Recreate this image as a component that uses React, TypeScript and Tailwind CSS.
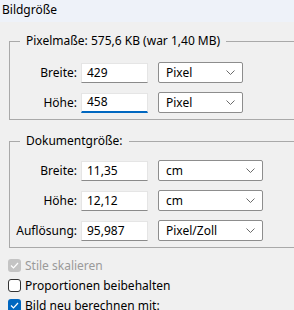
import React from 'react';

const font = { fontFamily: '"Segoe UI", "Noto Sans", sans-serif' };

const Chevron = () => (
  <svg width="9" height="5" viewBox="0 0 9 5" className="shrink-0">
    <path d="M0.5 0.5 L4.5 4.5 L8.5 0.5" fill="none" stroke="#6b6b6b" strokeWidth="1" />
  </svg>
);

const Row = ({ label, value, unit, selectW, focused }: any) => (
  <div className="flex items-center h-[21px]">
    <div className="w-[68px] pr-[1px] text-right">{label}</div>
    <div
      className={`ml-[3px] w-[67px] h-[20px] bg-white flex items-center pl-[5px] border-[#e5e5e5] border ${
        focused ? 'border-b-2 border-b-[#0067c0]' : 'border-b-[#8a8a8a]'
      }`}
    >
      {value}
    </div>
    <div
      className={`ml-[10px] h-[21px] bg-white border border-[#8d8d8d] rounded-[2px] flex items-center justify-between pl-[7px] pr-[7px] ${selectW}`}
    >
      <span>{unit}</span>
      <Chevron />
    </div>
  </div>
);

const Check = ({ state }: { state: 'disabled' | 'off' | 'on' }) => {
  if (state === 'off')
    return <div className="w-[13px] h-[13px] rounded-[3px] border border-[#333] bg-white" />;
  const bg = state === 'on' ? 'bg-[#0067c0]' : 'bg-[#c4c4c4]';
  return (
    <div className={`w-[13px] h-[13px] rounded-[3px] flex items-center justify-center ${bg}`}>
      <svg width="9" height="7" viewBox="0 0 9 7">
        <path d="M1 3.5 L3.5 6 L8 1" fill="none" stroke="white" strokeWidth="1.2" />
      </svg>
    </div>
  );
};

export default function App() {
  return (
    <div className="w-[294px] h-[310px] overflow-hidden bg-[#f0f0f0] text-[12px] text-black leading-[16px]" style={font}>
      <div className="h-[22px] bg-[#eef2f9] pl-[2px] pt-[2px]">Bildgröße</div>

      <fieldset className="ml-[9px] mt-[11px] w-[300px] border border-[#a9a9a9] pb-[6px]">
        <legend className="ml-[10px] px-[6px]">Pixelmaße: 575,6 KB (war 1,40 MB)</legend>
        <div className="mt-[13px] flex flex-col gap-[9px]">
          <Row label="Breite:" value="429" unit="Pixel" selectW="w-[85px]" />
          <Row label="Höhe:" value="458" unit="Pixel" selectW="w-[85px]" focused />
        </div>
      </fieldset>

      <fieldset className="ml-[9px] mt-[13px] w-[300px] border border-[#a9a9a9] pb-[6px]">
        <legend className="ml-[10px] px-[6px]">Dokumentgröße:</legend>
        <div className="mt-[11px] flex flex-col gap-[9px]">
          <Row label="Breite:" value="11,35" unit="cm" selectW="w-[105px]" />
          <Row label="Höhe:" value="12,12" unit="cm" selectW="w-[105px]" />
          <Row label="Auflösung:" value="95,987" unit="Pixel/Zoll" selectW="w-[105px]" />
        </div>
      </fieldset>

      <div className="mt-[11px] pl-[8px] flex flex-col gap-[7px]">
        <div className="flex items-center gap-[4px] h-[13px]">
          <Check state="disabled" />
          <span className="text-[#9a9a9a]">Stile skalieren</span>
        </div>
        <div className="flex items-center gap-[4px] h-[13px]">
          <Check state="off" />
          <span>Proportionen beibehalten</span>
        </div>
        <div className="flex items-center gap-[4px] h-[13px]">
          <Check state="on" />
          <span>Bild neu berechnen mit:</span>
        </div>
      </div>
    </div>
  );
}
